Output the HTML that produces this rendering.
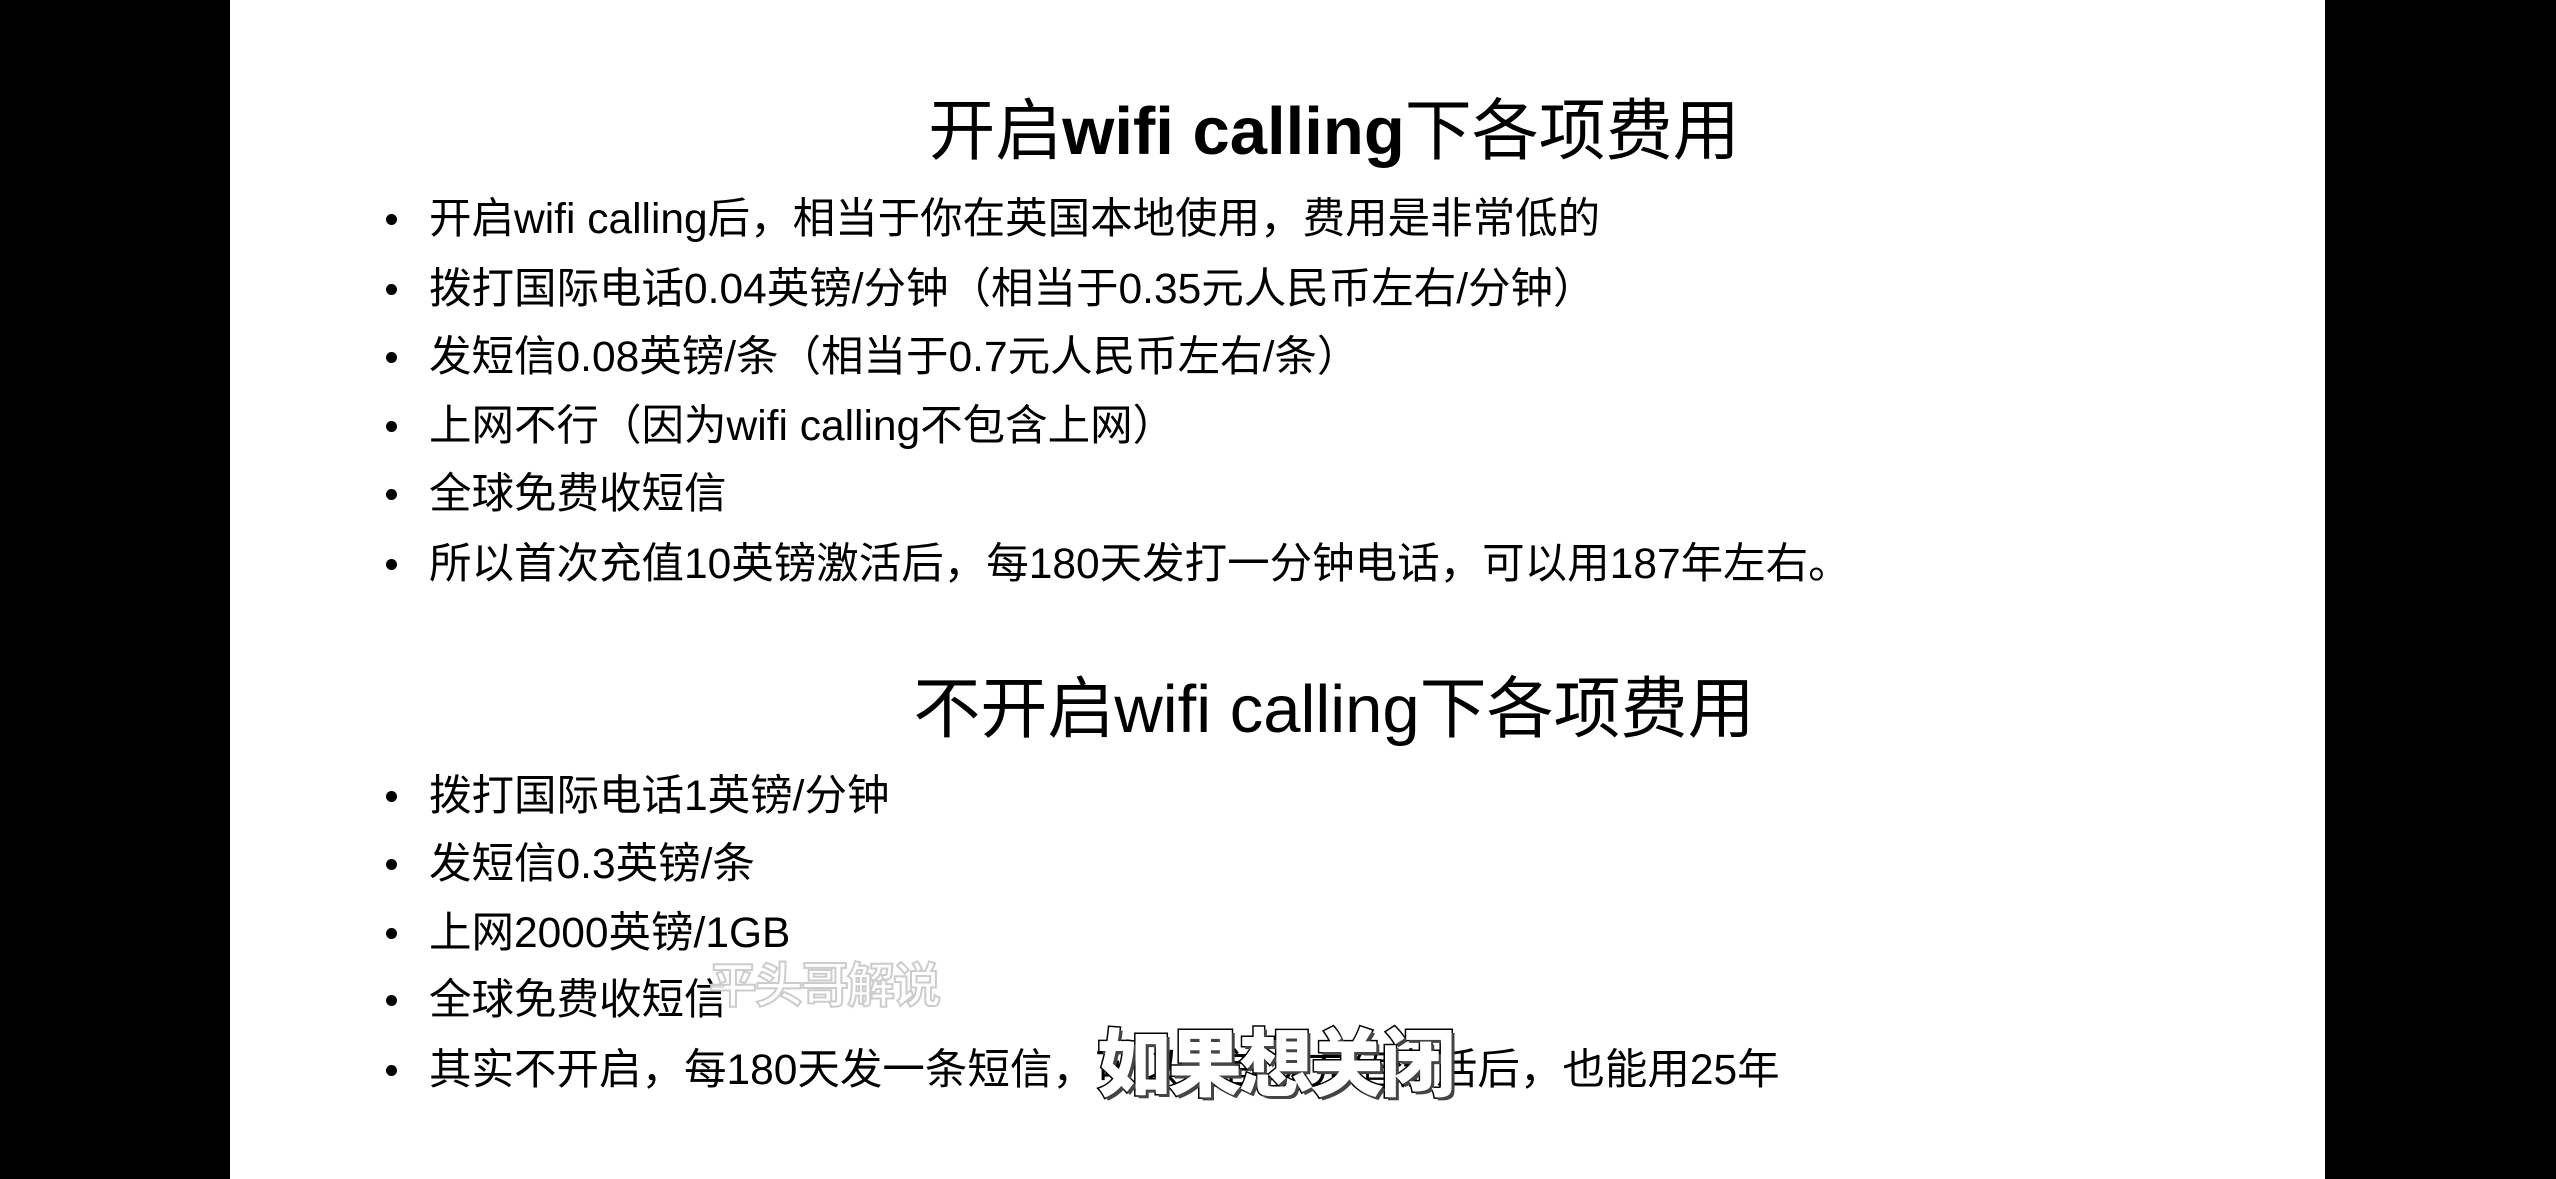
<!DOCTYPE html>
<html><head><meta charset="utf-8"><style>
html,body{margin:0;padding:0;background:#000;}
body{width:2556px;height:1179px;position:relative;overflow:hidden;font-family:"Liberation Sans","Noto Sans CJK SC",sans-serif;color:#000;}
.page{position:absolute;left:230px;top:0;width:2095px;height:1179px;background:#fff;}
.t{position:absolute;white-space:nowrap;line-height:1;}
.title{font-size:67px;left:0;width:2668px;text-align:center;}
.li{font-size:42.5px;left:429px;margin-top:3px;}
.b{position:absolute;left:386px;width:11px;height:11px;border-radius:50%;background:#000;margin-top:3px;}
.wm{font-size:48px;font-weight:bold;color:rgba(255,255,255,0.85);-webkit-text-stroke:2px #ccc;left:709px;top:957px;letter-spacing:-2px;font-family:"Noto Sans CJK SC",sans-serif;}
.sub{font-size:74px;font-weight:900;color:#fff;-webkit-text-stroke:3px #000;paint-order:stroke fill;left:1097px;top:1022px;text-shadow:3px 3px 0 #444;font-family:"Noto Sans CJK SC",sans-serif;letter-spacing:-3px;}
</style></head><body>
<div class="page"></div>
<div class="t title" style="top:98px;">开启<b>wifi calling</b>下各项费用</div>
<div class="b" style="top:211px"></div><div class="t li" style="top:196px">开启wifi calling后，相当于你在英国本地使用，费用是非常低的</div>
<div class="b" style="top:281px"></div><div class="t li" style="top:266px">拨打国际电话0.04英镑/分钟（相当于0.35元人民币左右/分钟）</div>
<div class="b" style="top:349px"></div><div class="t li" style="top:334px">发短信0.08英镑/条（相当于0.7元人民币左右/条）</div>
<div class="b" style="top:418px"></div><div class="t li" style="top:403px">上网不行（因为wifi calling不包含上网）</div>
<div class="b" style="top:486px"></div><div class="t li" style="top:471px">全球免费收短信</div>
<div class="b" style="top:556px"></div><div class="t li" style="top:541px">所以首次充值10英镑激活后，每180天发打一分钟电话，可以用187年左右。</div>
<div class="t title" style="top:676px;">不开启wifi calling下各项费用</div>
<div class="b" style="top:788px"></div><div class="t li" style="top:773px">拨打国际电话1英镑/分钟</div>
<div class="b" style="top:856px"></div><div class="t li" style="top:841px">发短信0.3英镑/条</div>
<div class="b" style="top:925px"></div><div class="t li" style="top:910px">上网2000英镑/1GB</div>
<div class="b" style="top:992px"></div><div class="t li" style="top:977px">全球免费收短信</div>
<div class="b" style="top:1062px"></div><div class="t li" style="top:1047px">其实不开启，每180天发一条短信，可以在首次充值激活后，也能用25年</div>
<div class="t wm">平头哥解说</div>
<div class="t sub">如果想关闭</div>
</body></html>
